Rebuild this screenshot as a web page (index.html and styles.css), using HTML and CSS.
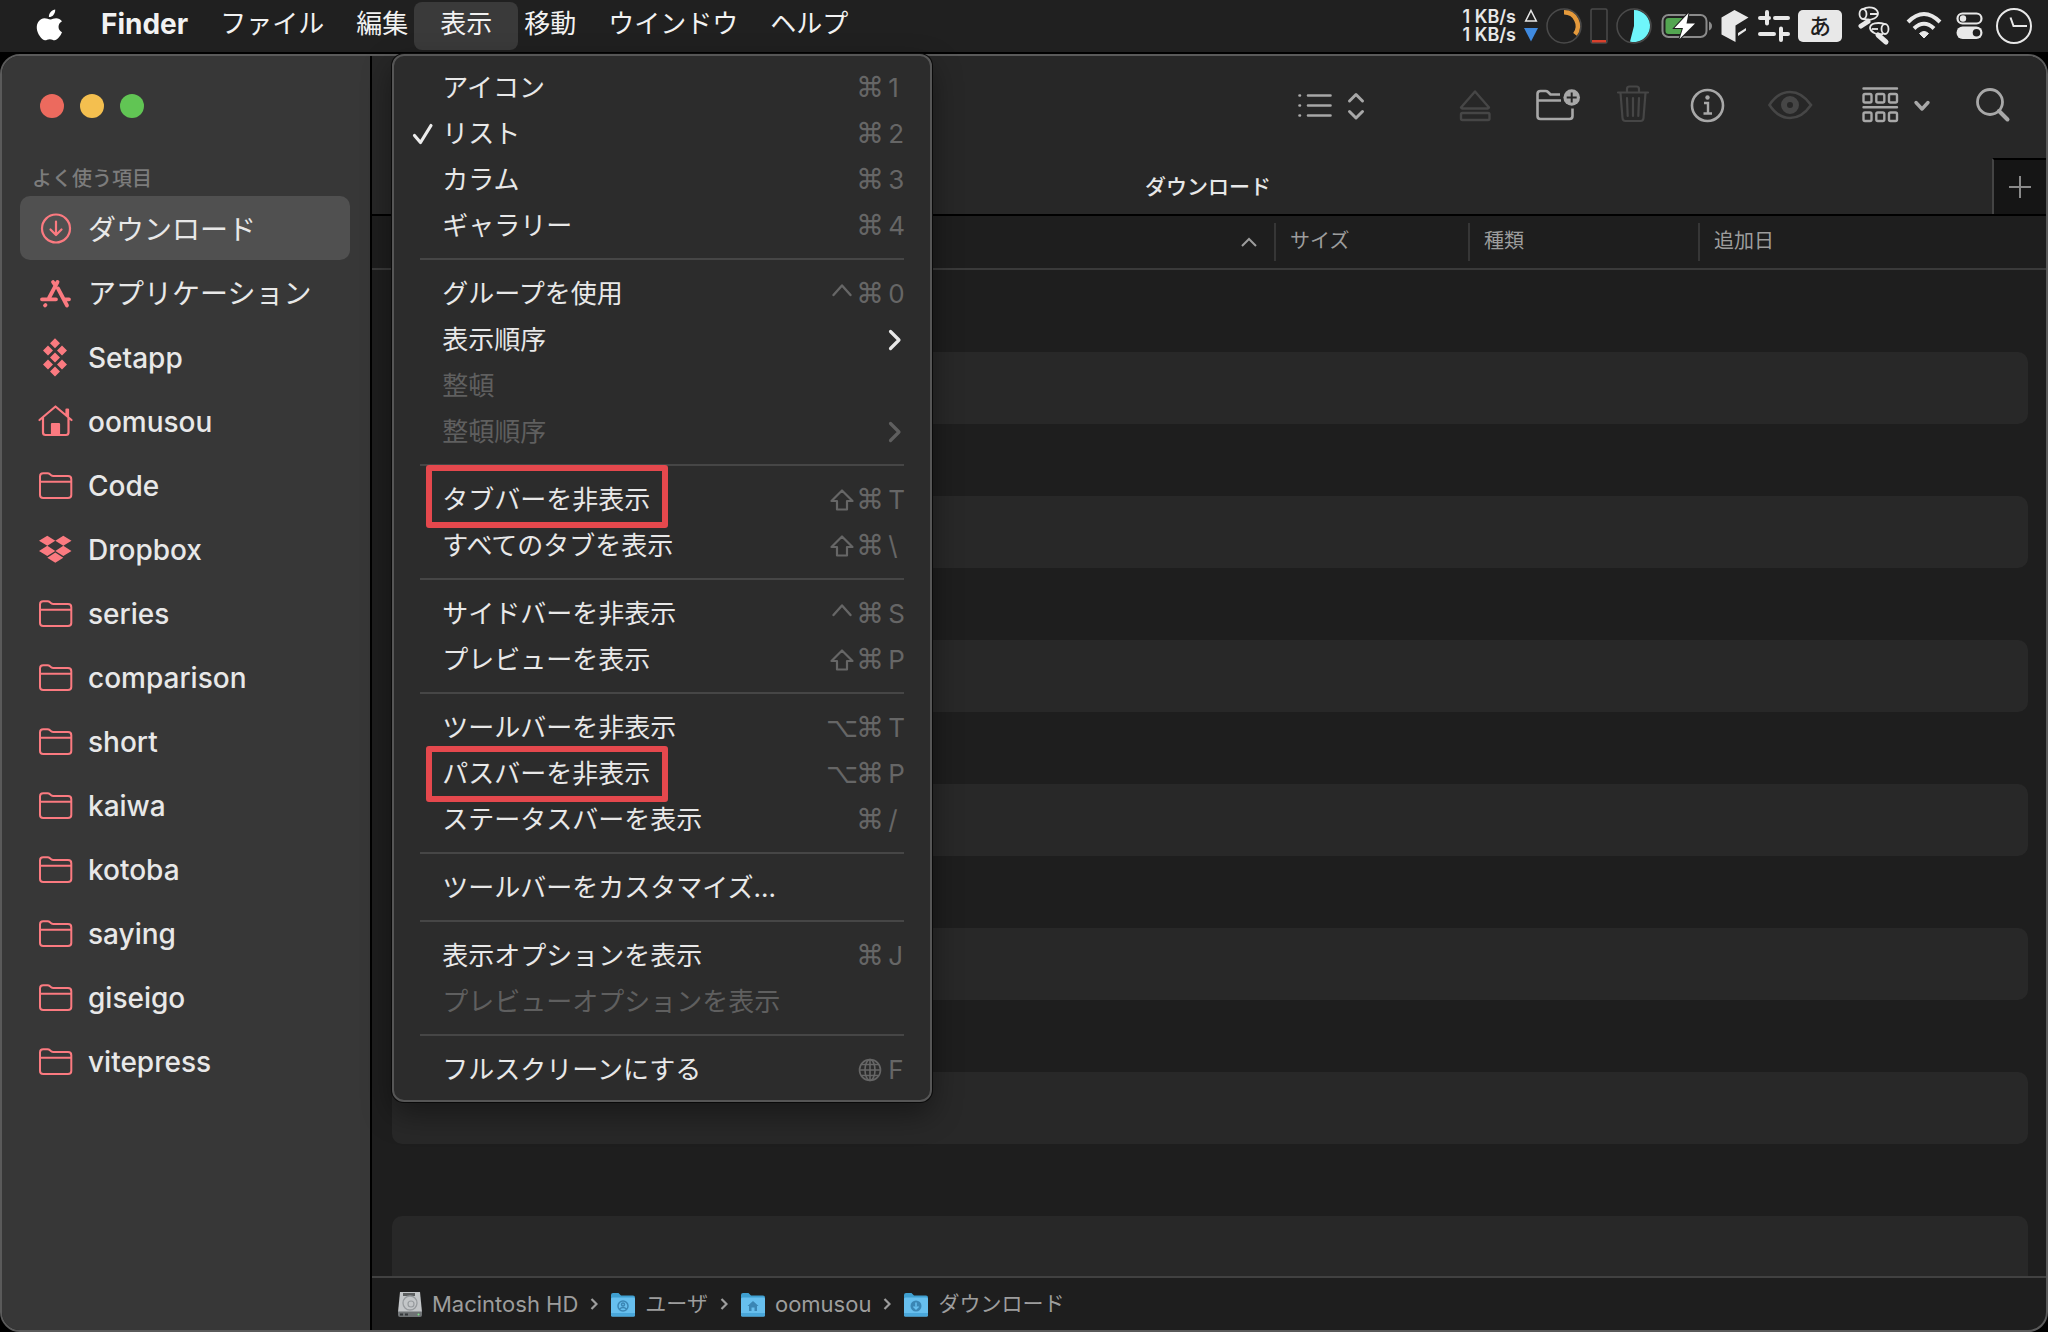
FILE: index.html
```html
<!DOCTYPE html>
<html lang="ja">
<head>
<meta charset="utf-8">
<meta name="viewport" content="width=device-width, initial-scale=1">
<title>ダウンロード</title>
<link rel="stylesheet" href="styles.css">
</head>
<body>

<svg class="defs" aria-hidden="true">
  <symbol id="folder" viewBox="0 0 36 36">
    <path d="M2 29V10.500Q2 7.300 5.200 7.300H9.500Q11 7.300 12 8.200L13.200 9.300Q14 10 15.500 10H30Q33.300 10 33.300 13.200V29Q33.300 32 30 32H5.200Q2 32 2 29ZM2 15.700H33.300" fill="none" stroke="currentColor" stroke-width="2"/>
  </symbol>
  <symbol id="blue-folder" viewBox="0 0 28 28">
    <path d="M2 5Q2 3 4 3H9.500L12 5.500H24Q26 5.500 26 7.500V10H2Z" fill="#3f9fd0"/>
    <rect x="2" y="7.500" width="24" height="19" rx="1.500" fill="#67bfee"/>
    <path d="M2 23H26V25Q26 26.500 24.500 26.500H3.500Q2 26.500 2 25Z" fill="#4aa7da"/>
  </symbol>
  <symbol id="next" viewBox="0 0 8 14">
    <path d="M1.500 2L6.500 7L1.500 12" fill="none" stroke="currentColor" stroke-width="2.200"/>
  </symbol>
  <symbol id="submenu" viewBox="0 0 20 26">
    <path d="M2.500 4.500L11 13L2.500 21.500" fill="none" stroke="currentColor" stroke-width="3.200" stroke-linecap="round" stroke-linejoin="round"/>
  </symbol>
  <symbol id="shift" viewBox="0 0 26 26">
    <path d="M13 3.500L23.500 14H18V22.500H8V14H2.500Z" fill="none" stroke="currentColor" stroke-width="2.200" stroke-linejoin="round"/>
  </symbol>
  <symbol id="control" viewBox="0 0 26 26">
    <path d="M4.500 14L13 4.500L21.500 14" fill="none" stroke="currentColor" stroke-width="2.400" stroke-linecap="round" stroke-linejoin="round"/>
  </symbol>
</svg>

<header class="menubar">
  <ul class="menus">
    <li><button class="menu-title apple" aria-label="Apple">
      <svg width="28" height="32" viewBox="0 0 28 32"><path d="M19.200.500C19.400 2.600 18.600 4.500 17.400 5.900C16.200 7.300 14.500 8.200 12.900 8.100C12.700 6.200 13.600 4.300 14.700 3C15.900 1.600 17.800.600 19.200.500ZM26 23.200C25.300 24.900 24.900 25.600 23.900 27.100C22.500 29.100 20.700 31.300 18.700 31.300C16.800 31.400 16.300 30.200 13.800 30.200C11.300 30.200 10.700 31.400 8.800 31.300C6.700 31.300 5.100 29.100 3.700 27.100C.400 22.200-.100 16.400 2.200 13C3.700 10.700 6.200 9.300 8.500 9.300C10.900 9.300 12.400 10.500 14.400 10.500C16.300 10.500 17.500 9.300 20.200 9.300C22.300 9.300 24.500 10.400 26 12.300C21 14.900 21.800 21.500 26 23.200Z" fill="#fff"/></svg>
    </button></li>
    <li><button class="menu-title app-name">Finder</button></li>
    <li><button class="menu-title">ファイル</button></li>
    <li><button class="menu-title">編集</button></li>
    <li class="open">
      <button class="menu-title active" aria-expanded="true">表示</button>
      <ul class="dropdown">
        <li><button class="item"><span class="mark"></span><span class="label">アイコン</span><kbd><span class="mod">⌘</span><span class="key">1</span></kbd></button></li>
        <li><button class="item"><span class="mark"><svg width="24" height="24" viewBox="0 0 24 24"><path d="M2.500 13.500L8.500 20.500L19 3.500" fill="none" stroke="#ececec" stroke-width="3.200" stroke-linecap="round" stroke-linejoin="round"/></svg></span><span class="label">リスト</span><kbd><span class="mod">⌘</span><span class="key">2</span></kbd></button></li>
        <li><button class="item"><span class="mark"></span><span class="label">カラム</span><kbd><span class="mod">⌘</span><span class="key">3</span></kbd></button></li>
        <li><button class="item"><span class="mark"></span><span class="label">ギャラリー</span><kbd><span class="mod">⌘</span><span class="key">4</span></kbd></button></li>
        <li class="rule" role="separator"></li>
        <li><button class="item"><span class="mark"></span><span class="label">グループを使用</span><kbd><span class="mod"><svg width="26" height="26" aria-label="Control"><use href="#control"/></svg></span><span class="mod">⌘</span><span class="key">0</span></kbd></button></li>
        <li><button class="item"><span class="mark"></span><span class="label">表示順序</span><svg class="arrow" width="20" height="26"><use href="#submenu"/></svg></button></li>
        <li><button class="item" disabled><span class="mark"></span><span class="label">整頓</span></button></li>
        <li><button class="item" disabled><span class="mark"></span><span class="label">整頓順序</span><svg class="arrow" width="20" height="26"><use href="#submenu"/></svg></button></li>
        <li class="rule" role="separator"></li>
        <li class="noted noted-tab"><button class="item"><span class="mark"></span><span class="label">タブバーを非表示</span><kbd><span class="mod"><svg width="26" height="26" aria-label="Shift"><use href="#shift"/></svg></span><span class="mod">⌘</span><span class="key">T</span></kbd></button></li>
        <li><button class="item"><span class="mark"></span><span class="label">すべてのタブを表示</span><kbd><span class="mod"><svg width="26" height="26" aria-label="Shift"><use href="#shift"/></svg></span><span class="mod">⌘</span><span class="key">\</span></kbd></button></li>
        <li class="rule" role="separator"></li>
        <li><button class="item"><span class="mark"></span><span class="label">サイドバーを非表示</span><kbd><span class="mod"><svg width="26" height="26" aria-label="Control"><use href="#control"/></svg></span><span class="mod">⌘</span><span class="key">S</span></kbd></button></li>
        <li><button class="item"><span class="mark"></span><span class="label">プレビューを表示</span><kbd><span class="mod"><svg width="26" height="26" aria-label="Shift"><use href="#shift"/></svg></span><span class="mod">⌘</span><span class="key">P</span></kbd></button></li>
        <li class="rule" role="separator"></li>
        <li><button class="item"><span class="mark"></span><span class="label">ツールバーを非表示</span><kbd><span class="mod">⌥</span><span class="mod">⌘</span><span class="key">T</span></kbd></button></li>
        <li class="noted noted-path"><button class="item"><span class="mark"></span><span class="label">パスバーを非表示</span><kbd><span class="mod">⌥</span><span class="mod">⌘</span><span class="key">P</span></kbd></button></li>
        <li><button class="item"><span class="mark"></span><span class="label">ステータスバーを表示</span><kbd><span class="mod">⌘</span><span class="key">/</span></kbd></button></li>
        <li class="rule" role="separator"></li>
        <li><button class="item"><span class="mark"></span><span class="label">ツールバーをカスタマイズ...</span></button></li>
        <li class="rule" role="separator"></li>
        <li><button class="item"><span class="mark"></span><span class="label">表示オプションを表示</span><kbd><span class="mod">⌘</span><span class="key">J</span></kbd></button></li>
        <li><button class="item" disabled><span class="mark"></span><span class="label">プレビューオプションを表示</span></button></li>
        <li class="rule" role="separator"></li>
        <li><button class="item"><span class="mark"></span><span class="label">フルスクリーンにする</span><kbd><span class="mod"><svg width="24" height="24" viewBox="0 0 24 24" fill="none" stroke="currentColor" stroke-width="1.600"><circle cx="12" cy="12" r="10.500"/><ellipse cx="12" cy="12" rx="5" ry="10.500"/><path d="M12 1.500V22.500M1.500 12H22.500M3.500 6.500H20.500M3.500 17.500H20.500"/></svg></span><span class="key">F</span></kbd></button></li>
      </ul>
    </li>
    <li><button class="menu-title">移動</button></li>
    <li><button class="menu-title">ウインドウ</button></li>
    <li><button class="menu-title">ヘルプ</button></li>
  </ul>

  <div class="status">
    <div class="meters">
      <p class="speed">1 KB/s<br>1 KB/s</p>
      <svg width="14" height="36" viewBox="0 0 14 36"><path d="M7 2.500L12.300 13H1.700Z" fill="none" stroke="#e8e8e8" stroke-width="1.500"/><path d="M0 20H14L7 33.500Z" fill="#3f8ae0"/></svg>
      <svg width="36" height="36" viewBox="0 0 36 36" fill="none"><circle cx="18" cy="18" r="17" stroke="#4a4a4a" stroke-width="1.500"/><path d="M18 4.300A13.700 13.700 0 0 1 29 26.300" stroke="#e59a3c" stroke-width="4.500"/></svg>
      <svg width="18" height="36" viewBox="0 0 18 36"><rect x="1" y="1" width="16" height="34" rx="1.500" fill="none" stroke="#4a4a4a" stroke-width="1.500"/><rect x="2" y="32" width="14" height="2.500" fill="#d8402c"/></svg>
      <svg width="36" height="36" viewBox="0 0 36 36"><circle cx="18" cy="18" r="17" fill="none" stroke="#4a4a4a" stroke-width="1.500"/><path d="M18 2A16 16 0 1 1 14 33.500L18 18Z" fill="#6ff6fb"/></svg>
      <svg width="52" height="36" viewBox="0 0 52 36"><rect x="2.500" y="7" width="44" height="22" rx="6" fill="none" stroke="#8b8b8b" stroke-width="2"/><path d="M49 13.500Q52 15 52 18Q52 21 49 22.500Z" fill="#8b8b8b"/><rect x="5.500" y="10" width="19" height="16" rx="3" fill="#53a651"/><path d="M28.500 5L14.500 20H23L19.500 31L35 15.500H26.500Z" fill="#fff" stroke="#202020" stroke-width="2" paint-order="stroke"/></svg>
      <svg width="30" height="36" viewBox="0 0 30 36"><path d="M14.500 2L28.500 9.500L15.500 17.500V34L1.500 26.500V9.500ZM18 25L26 20V22.500L18 28Z" fill="#e8e8e8"/></svg>
      <svg width="32" height="36" viewBox="0 0 32 36" stroke="#e8e8e8" stroke-width="4" stroke-linecap="round"><path d="M2 10H11M17 10H30M9 4V15.500M2 26H16M24 26H30M23 20.500V32"/></svg>
      <span class="ime">あ</span>
    </div>
    <div class="controls">
      <svg width="34" height="40" viewBox="0 0 34 40" fill="none" stroke="#e8e8e8"><g stroke-width="1.800"><ellipse cx="5" cy="8" rx="3.500" ry="5"/><path d="M5 3C10 0 19 1 20 7C20 12 14 14 8 14"/><path d="M12 8H19M5 13L12 14"/><ellipse cx="27" cy="23" rx="3.500" ry="5"/><path d="M27 18C20 16 12 17 12 22C13 27 19 29 25 28"/><path d="M14 23H20"/></g><path d="M3 20L10 15.500M20 29L28 36" stroke-width="5" stroke-linecap="round"/></svg>
      <svg width="36" height="36" viewBox="0 0 36 36" fill="none" stroke="#e8e8e8" stroke-width="4"><path d="M2 14Q18-2 34 14M8 20.500Q18 11 28 20.500"/><path d="M18 30L13.500 25.500Q18 21.500 22.500 25.500Z" fill="#e8e8e8" stroke-width="1"/></svg>
      <svg width="26" height="36" viewBox="0 0 26 36"><rect x="1.500" y="5.500" width="24" height="10" rx="5" fill="none" stroke="#e8e8e8" stroke-width="2.200"/><circle cx="7" cy="10.500" r="3.200" fill="#e8e8e8"/><rect x=".5" y="18.500" width="26" height="12.500" rx="6.200" fill="#e8e8e8"/><circle cx="20.500" cy="24.700" r="3.800" fill="#202020"/></svg>
      <svg width="36" height="36" viewBox="0 0 36 36" fill="none" stroke="#e8e8e8" stroke-width="2"><circle cx="18" cy="18" r="17"/><path d="M14.500 9.500L17.500 18H31"/></svg>
    </div>
  </div>
</header>

<main class="window">
  <aside class="sidebar">
    <div class="lights">
      <button class="light close" aria-label="閉じる"></button>
      <button class="light minimize" aria-label="しまう"></button>
      <button class="light zoom" aria-label="拡大"></button>
    </div>
    <h2 class="section">よく使う項目</h2>
    <ul class="places">
      <li><a class="place ja selected" href="#"><svg width="36" height="36" viewBox="0 0 36 36" fill="none" stroke="currentColor" stroke-width="2.200"><circle cx="18" cy="18.500" r="14"/><path d="M18 11.500V24.500M12.500 19.500L18 25L23.500 19.500" stroke-linecap="round" stroke-linejoin="round"/></svg>ダウンロード</a></li>
      <li><a class="place ja" href="#"><svg width="36" height="36" viewBox="0 0 36 36" fill="none" stroke="currentColor" stroke-width="3.800" stroke-linecap="round"><path d="M19.500 8L11 24M15 8L17 11M20 14.500L29 31.500M4 25.300H18M26 25.300H31M7 31.500L7.500 31"/></svg>アプリケーション</a></li>
      <li><a class="place" href="#"><svg width="36" height="36" viewBox="0 0 36 36" fill="currentColor"><path d="M17 .300L22 5.300L17 10.300L12 5.300ZM10 7.500L15 12.500L10 17.500L5 12.500ZM24 7.500L29 12.500L24 17.500L19 12.500ZM17 14.500L22 19.500L17 24.500L12 19.500ZM10 21.500L15 26.500L10 31.500L5 26.500ZM24 21.500L29 26.500L24 31.500L19 26.500ZM17 28.500L22 33.500L17 38.500L12 33.500Z"/></svg>Setapp</a></li>
      <li><a class="place" href="#"><svg width="36" height="36" viewBox="0 0 36 36" fill="none" stroke="currentColor" stroke-width="2.200" stroke-linecap="round" stroke-linejoin="round"><path d="M1.500 18L17.500 4.500L33.500 18M5 16V30.500Q5 33 7.500 33H28Q30.500 33 30.500 30.500V16M28.500 12.500V7.500H30V14"/><path d="M14 22H21V33H14Z" fill="currentColor"/></svg>oomusou</a></li>
      <li><a class="place" href="#"><svg width="36" height="36"><use href="#folder"/></svg>Code</a></li>
      <li><a class="place" href="#"><svg width="36" height="36" viewBox="0 0 36 36" fill="currentColor"><path d="M9.300 5.700L17.300 10.800L9.300 15.800L1 10.800ZM25.300 5.700L33.500 10.800L25.300 15.800L17.300 10.800ZM9.300 15.800L17.300 20.900L9.300 26L1 20.900ZM25.300 15.800L33.500 20.900L25.300 26L17.300 20.900ZM17.300 22.600L25.300 27.700L17.300 32.800L9.300 27.700Z"/></svg>Dropbox</a></li>
      <li><a class="place" href="#"><svg width="36" height="36"><use href="#folder"/></svg>series</a></li>
      <li><a class="place" href="#"><svg width="36" height="36"><use href="#folder"/></svg>comparison</a></li>
      <li><a class="place" href="#"><svg width="36" height="36"><use href="#folder"/></svg>short</a></li>
      <li><a class="place" href="#"><svg width="36" height="36"><use href="#folder"/></svg>kaiwa</a></li>
      <li><a class="place" href="#"><svg width="36" height="36"><use href="#folder"/></svg>kotoba</a></li>
      <li><a class="place" href="#"><svg width="36" height="36"><use href="#folder"/></svg>saying</a></li>
      <li><a class="place" href="#"><svg width="36" height="36"><use href="#folder"/></svg>giseigo</a></li>
      <li><a class="place" href="#"><svg width="36" height="36"><use href="#folder"/></svg>vitepress</a></li>
    </ul>
  </aside>

  <section class="content">
    <div class="toolbar">
      <button class="tool view" aria-label="表示方法"><svg width="68" height="40" viewBox="0 0 68 40" fill="none" stroke="currentColor" stroke-width="2.600" stroke-linecap="round" stroke-linejoin="round"><path d="M2.500 10.500H3M11 10.500H33.500M2.500 20.500H3M11 20.500H33.500M2.500 30.500H3M11 30.500H33.500"/><path d="M52.500 16L59 9.500L65.500 16M52.500 26.500L59 33L65.500 26.500" stroke-width="3"/></svg></button>
      <button class="tool" disabled aria-label="取り出す"><svg width="40" height="40" viewBox="0 0 40 40" fill="none" stroke="currentColor" stroke-width="2.400" stroke-linejoin="round"><path d="M18 6.500L32 22.500Q31.500 23.500 30.500 23.500H5.500Q4.500 23.500 4 22.500Z"/><rect x="4" y="28" width="28.500" height="7" rx="1.500"/></svg></button>
      <button class="tool" aria-label="新規フォルダ"><svg width="46" height="40" viewBox="0 0 46 40" fill="none" stroke="currentColor" stroke-width="2.600" stroke-linejoin="round"><path d="M27 9.500H17.500L15 7Q14 6 12.500 6H7.500Q4.500 6 4.500 9V31Q4.500 34 7.500 34H36.500Q39.500 34 39.500 31V23.500M4.500 15.500H28"/><circle cx="38.700" cy="12.500" r="8.300" fill="currentColor" stroke="none"/><path d="M38.700 7.500V17.500M33.700 12.500H43.700" stroke="#272727" stroke-width="2"/></svg></button>
      <button class="tool" disabled aria-label="ゴミ箱に入れる"><svg width="38" height="40" viewBox="0 0 38 40" fill="none" stroke="currentColor" stroke-width="2.200" stroke-linecap="round" stroke-linejoin="round"><path d="M3 7.500H33M12 7V4Q12 1.500 14.500 1.500H21.500Q24 1.500 24 4V7M5.500 8L7.500 33Q7.700 36 10.500 36H25.500Q28.300 36 28.500 33L30.500 8M12 13L12.700 31M18 13V31M24 13L23.300 31"/></svg></button>
      <button class="tool" aria-label="情報を見る"><svg width="40" height="40" viewBox="0 0 40 40" fill="none" stroke="currentColor" stroke-width="2.600"><circle cx="18.500" cy="20.500" r="15.500"/><circle cx="18.500" cy="12.500" r="2.200" fill="currentColor" stroke="none"/><path d="M15 18H19V28.500M14.500 28.500H23" stroke-width="2.400"/></svg></button>
      <button class="tool" disabled aria-label="クイックルック"><svg width="60" height="40" viewBox="0 0 60 40" fill="none" stroke="currentColor" stroke-width="2.600"><path d="M4.500 20Q13 7 25 7Q37 7 46 20Q37 33 25 33Q13 33 4.500 20Z"/><circle cx="25" cy="20" r="6" stroke-width="6"/></svg></button>
      <button class="tool" aria-label="グループ"><svg width="78" height="40" viewBox="0 0 78 40" fill="none" stroke="currentColor" stroke-width="2.400" stroke-linecap="round" stroke-linejoin="round"><path d="M2.500 3.500H36M2.500 22.300H36"/><rect x="2.500" y="9" width="8" height="8.500" rx="1.500"/><rect x="15.300" y="9" width="8" height="8.500" rx="1.500"/><rect x="28" y="9" width="8" height="8.500" rx="1.500"/><rect x="2.500" y="27.500" width="8" height="8.500" rx="1.500"/><rect x="15.300" y="27.500" width="8" height="8.500" rx="1.500"/><rect x="28" y="27.500" width="8" height="8.500" rx="1.500"/><path d="M55 17.500L61 24L67 17.500" stroke-width="3.400"/></svg></button>
      <button class="tool" aria-label="検索"><svg width="36" height="40" viewBox="0 0 36 40" fill="none" stroke="currentColor" stroke-width="2.800"><circle cx="15" cy="17" r="12.500"/><path d="M24 26L32.500 34.500" stroke-width="4" stroke-linecap="round"/></svg></button>
    </div>

    <div class="tabs">
      <button class="tab">ダウンロード</button>
      <button class="new-tab" aria-label="新規タブ"><svg width="24" height="24" viewBox="0 0 24 24"><path d="M12 1V23M1 12H23" stroke="#8a8a8a" stroke-width="2"/></svg></button>
    </div>

    <table class="columns">
      <colgroup><col><col class="col-size"><col class="col-kind"><col class="col-date"></colgroup>
      <thead>
        <tr>
          <th scope="col" class="sorted" aria-label="名前"><svg width="18" height="12" viewBox="0 0 18 12"><path d="M2 10L9 3L16 10" fill="none" stroke="#9d9d9d" stroke-width="2"/></svg></th>
          <th scope="col"><div class="cell">サイズ</div></th>
          <th scope="col"><div class="cell">種類</div></th>
          <th scope="col"><div class="cell">追加日</div></th>
        </tr>
      </thead>
    </table>

    <ul class="rows">
      <li></li><li></li><li></li><li></li><li></li><li></li><li></li>
      <li></li><li></li><li></li><li></li><li></li><li></li><li></li>
    </ul>

    <nav class="pathbar">
      <a href="#"><svg width="28" height="28" viewBox="0 0 28 28"><path d="M4 2H24L26 22H2Z" fill="#c3c6c8"/><path d="M2 21.500H26V25Q26 27 24 27H4Q2 27 2 25Z" fill="#6f7375"/><rect x="7" y="3" width="12" height="3" fill="#5c5f60"/><circle cx="14" cy="13" r="7" fill="none" stroke="#979b9e" stroke-width="1.300"/><circle cx="15" cy="14" r="3" fill="none" stroke="#979b9e" stroke-width="1.200"/><path d="M4 24.500H14" stroke="#34383a" stroke-width="2" stroke-dasharray="3 2"/><circle cx="22.500" cy="24.500" r="1" fill="#7fe08a"/></svg>Macintosh HD</a>
      <svg class="sep" width="8" height="14"><use href="#next"/></svg>
      <a class="ja" href="#"><svg width="28" height="28" viewBox="0 0 28 28"><use href="#blue-folder"/><g fill="none" stroke="#3b86b4" stroke-width="1.500"><circle cx="14" cy="16" r="5"/><circle cx="14" cy="14.500" r="1.500"/><path d="M10.500 19Q14 16 17.500 19"/></g></svg>ユーザ</a>
      <svg class="sep" width="8" height="14"><use href="#next"/></svg>
      <a href="#"><svg width="28" height="28" viewBox="0 0 28 28"><use href="#blue-folder"/><path d="M8.500 16L14 11L19.500 16H18V21H15.500V17.500H12.500V21H10V16Z" fill="#3b86b4"/></svg>oomusou</a>
      <svg class="sep" width="8" height="14"><use href="#next"/></svg>
      <a class="ja" href="#"><svg width="28" height="28" viewBox="0 0 28 28"><use href="#blue-folder"/><circle cx="14" cy="16" r="5.500" fill="#3b86b4"/><path d="M14 12.500V19M11.500 16.500L14 19L16.500 16.500" fill="none" stroke="#67bfee" stroke-width="1.500"/></svg>ダウンロード</a>
    </nav>
  </section>
</main>

</body>
</html>
```
FILE: styles.css
```css
*,
*::after {
  box-sizing: border-box;
}

body {
  margin: 0;
  height: 100vh;
  display: flex;
  flex-direction: column;
  gap: 2px;
  background: #000;
  color: #e8e8e8;
  font-family: Inter, "Noto Sans CJK JP", sans-serif;
  font-size: 26px;
  overflow: hidden;
}

ul {
  list-style: none;
  margin: 0;
  padding: 0;
}

button {
  border: 0;
  padding: 0;
  background: none;
  color: inherit;
  font: inherit;
}

a {
  color: inherit;
  text-decoration: none;
}

svg {
  display: block;
  flex: none;
  overflow: visible;
}

.defs {
  position: absolute;
  width: 0;
  height: 0;
}

/* Menu bar */

.menubar {
  flex: none;
  display: flex;
  justify-content: space-between;
  height: 52px;
  padding: 0 16px 0 20px;
  background: #202020;
}

.menus {
  display: flex;
}

.menus > li {
  display: flex;
  align-items: center;
}

.menu-title {
  height: 48px;
  padding: 0 16px 4px;
  color: #f2f2f2;
  line-height: 44px;
  white-space: nowrap;
}

.apple {
  padding: 0 21px 2px 16px;
}

.app-name {
  font-size: 28px;
  font-weight: 700;
}

.open {
  position: relative;
}

.active {
  margin: 0 -10px;
  padding: 0 26px 4px;
  border-radius: 8px;
  background: #3a3a3a;
}

.status,
.meters,
.controls {
  display: flex;
  align-items: center;
}

.status {
  gap: 16px;
}

.meters {
  gap: 8px;
}

.controls {
  gap: 14px;
}

.speed {
  margin: 0;
  font-size: 18px;
  font-weight: 600;
  line-height: 18px;
}

.ime {
  width: 44px;
  height: 32px;
  border-radius: 5px;
  background: #e8e8e8;
  color: #202020;
  font-size: 22px;
  font-weight: 500;
  line-height: 32px;
  text-align: center;
}

/* Open menu */

.dropdown {
  position: absolute;
  top: 54px;
  left: -32px;
  z-index: 2;
  width: 540px;
  padding: 9px 0 7px;
  border: 2px solid #565656;
  border-radius: 12px;
  background: #2c2c2c;
  box-shadow: 0 0 0 1px #0a0a0a, 0 12px 30px rgba(0, 0, 0, 0.4);
}

.item {
  display: flex;
  align-items: center;
  width: 100%;
  height: 46px;
  padding: 0 22px 0 18px;
  text-align: left;
  line-height: 46px;
}

.item:disabled {
  color: #5f5f5f;
}

.mark {
  flex: none;
  width: 30px;
}

.label {
  flex: 1;
  white-space: nowrap;
}

kbd {
  display: flex;
  color: #666;
  font: inherit;
}

.mod {
  display: flex;
  align-items: center;
  justify-content: center;
  width: 28px;
  font-family: "DejaVu Sans", sans-serif;
  font-size: 28px;
}

.key {
  width: 20px;
  margin-left: 4px;
}

.rule {
  height: 2px;
  margin: 9px 26px 11px;
  background: #464646;
}

.noted {
  position: relative;
}

.noted::after {
  content: "";
  position: absolute;
  left: 32px;
  width: 242px;
  border: 6px solid #e5484d;
  border-radius: 3px;
  pointer-events: none;
}

.noted-tab::after {
  top: -12px;
  height: 63px;
}

.noted-path::after {
  top: -5px;
  height: 56px;
}

/* Window */

.window {
  flex: 1;
  min-height: 0;
  display: flex;
  border: 2px solid #5a5a5a;
  border-radius: 20px;
  background: #1e1e1e;
  overflow: hidden;
}

.sidebar {
  flex: none;
  width: 370px;
  padding: 38px 18px 0;
  border-right: 2px solid #000;
  background: #373737;
}

.lights {
  display: flex;
  gap: 16px;
  padding-left: 20px;
}

.light {
  width: 24px;
  height: 24px;
  border-radius: 50%;
}

.close {
  background: #ec6a5e;
}

.minimize {
  background: #f4bf4f;
}

.zoom {
  background: #61c554;
}

.section {
  margin: 47px 0 3px 12px;
  color: #7c7c7c;
  font-size: 20px;
  font-weight: 500;
  line-height: 28px;
}

.place {
  display: flex;
  align-items: center;
  gap: 14px;
  height: 64px;
  margin-right: 2px;
  padding: 3px 0 0 18px;
  border-radius: 10px;
  font-size: 28px;
  font-weight: 500;
  line-height: 34px;
}

.place.ja {
  font-weight: 400;
}

.place svg {
  margin-bottom: 3px;
  color: #fb7a80;
}

.selected {
  background: #505050;
}

.content {
  flex: 1;
  min-width: 0;
  display: flex;
  flex-direction: column;
}

.toolbar {
  flex: none;
  display: flex;
  align-items: center;
  justify-content: flex-end;
  gap: 36px;
  height: 102px;
  padding: 0 35px 4px 0;
  background: #272727;
}

.tool {
  color: #a8a8a8;
}

.tool:disabled {
  color: #464646;
}

.view {
  margin-right: 56px;
}

.tabs {
  flex: none;
  display: flex;
  height: 58px;
  border-bottom: 2px solid #000;
  background: #272727;
}

.tab {
  flex: 1;
  padding: 0 0 2px 52px;
  font-size: 21px;
  font-weight: 500;
}

.new-tab {
  display: flex;
  align-items: center;
  justify-content: center;
  width: 54px;
  border-top: 2px solid #000;
  border-left: 2px solid #444;
  background: #151515;
}

.columns {
  flex: none;
  width: 100%;
  height: 54px;
  table-layout: fixed;
  border-collapse: collapse;
  border-bottom: 2px solid #3a3a3a;
  color: #9d9d9d;
  font-size: 20px;
}

.columns th {
  padding: 0;
  font-weight: 400;
  text-align: left;
}

.sorted svg {
  margin: 0 16px 0 auto;
}

.col-size {
  width: 194px;
}

.col-kind {
  width: 230px;
}

.col-date {
  width: 348px;
}

.cell {
  height: 38px;
  padding-left: 14px;
  border-left: 2px solid #363636;
  line-height: 36px;
}

.rows {
  flex: 1;
  min-height: 0;
  padding: 10px 18px 0 20px;
  overflow: hidden;
}

.rows li {
  height: 72px;
  border-radius: 10px;
}

.rows li:nth-child(even) {
  background: #282828;
}

.pathbar {
  flex: none;
  display: flex;
  align-items: center;
  height: 54px;
  padding-left: 24px;
  border-top: 2px solid #414141;
  color: #9d9d9d;
  font-size: 22px;
  line-height: 28px;
}

.pathbar a {
  display: flex;
  align-items: center;
  gap: 8px;
}

.pathbar .ja {
  font-size: 21px;
}

.sep {
  margin: 0 11px 0 12px;
}
```
